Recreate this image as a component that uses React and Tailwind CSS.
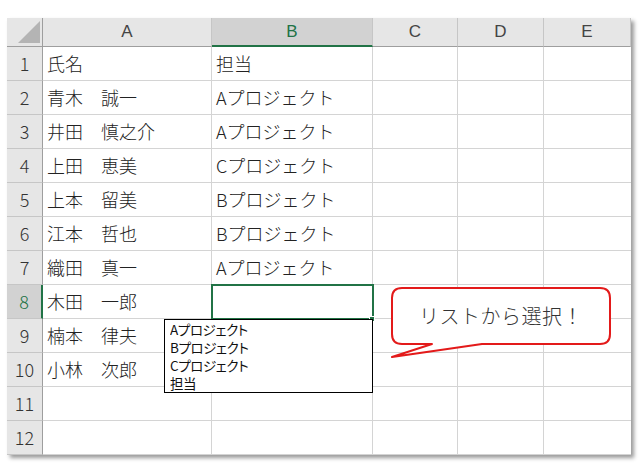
import React from 'react';

const cols = ['A', 'B', 'C', 'D', 'E'];

const rows = [
  ['氏名', '担当'],
  ['青木　誠一', 'Aプロジェクト'],
  ['井田　慎之介', 'Aプロジェクト'],
  ['上田　恵美', 'Cプロジェクト'],
  ['上本　留美', 'Bプロジェクト'],
  ['江本　哲也', 'Bプロジェクト'],
  ['織田　真一', 'Aプロジェクト'],
  ['木田　一郎', ''],
  ['楠本　律夫', ''],
  ['小林　次郎', ''],
  ['', ''],
  ['', ''],
];

const listItems = ['Aプロジェクト', 'Bプロジェクト', 'Cプロジェクト', '担当'];

const font = "font-['Noto_Sans_CJK_JP','Noto_Sans',sans-serif]";

export default function App() {
  return (
    <div className={`w-[642px] h-[464px] bg-white relative overflow-hidden pl-[7px] pt-[18px] ${font}`}>
      <div className="w-[624px] shadow-[3px_3px_4px_rgba(0,0,0,0.4)]">
        <div className="grid grid-cols-[36px_169px_161px_85px_86px_87px] grid-rows-[29px_repeat(12,34px)] bg-white">
          {/* corner */}
          <div className="bg-[#e6e6e6] border-r border-b border-[#9e9e9e] flex items-end justify-end pr-[2px] pb-[3px]">
            <svg width="22" height="22" viewBox="0 0 22 22">
              <polygon points="22,0 22,22 0,22" fill="#b4b4b4" />
            </svg>
          </div>
          {cols.map((c) => (
            <div
              key={c}
              className={
                c === 'B'
                  ? 'bg-[#d2d2d2] border-r border-[#c6c6c6] border-b-2 border-b-[#217346] flex items-center justify-center text-[17px] text-[#217346] font-["Liberation_Sans",sans-serif]'
                  : 'bg-[#e6e6e6] border-r border-[#c6c6c6] border-b border-b-[#9e9e9e] flex items-center justify-center text-[17px] text-[#444] font-["Liberation_Sans",sans-serif]'
              }
            >
              {c}
            </div>
          ))}
          {rows.map((r, i) => {
            const n = i + 1;
            const sel = n === 8;
            return (
              <React.Fragment key={n}>
                <div
                  className={
                    sel
                      ? 'bg-[#d2d2d2] border-b border-[#c6c6c6] border-r-2 border-r-[#217346] flex items-center justify-center text-[18px] font-light text-[#217346]'
                      : 'bg-[#e6e6e6] border-b border-[#c6c6c6] border-r border-r-[#9e9e9e] flex items-center justify-center text-[18px] font-light text-[#333]'
                  }
                >
                  {n}
                </div>
                <div className="border-r border-b border-[#d4d4d4] flex items-center pl-[4px] text-[18px] font-light text-[#222] whitespace-pre">
                  {r[0]}
                </div>
                <div className="border-r border-b border-[#d4d4d4] flex items-center pl-[4px] text-[18px] font-light text-[#222] whitespace-pre">
                  {r[1]}
                </div>
                <div className="border-r border-b border-[#d4d4d4]" />
                <div className="border-r border-b border-[#d4d4d4]" />
                <div className="border-b border-[#d4d4d4]" />
              </React.Fragment>
            );
          })}
        </div>
      </div>

      {/* selected cell B8 */}
      <div className="absolute left-[211px] top-[284px] w-[163px] h-[36px] border-2 border-[#217346]" />
      <div className="absolute left-[369px] top-[316px] w-[6px] h-[6px] bg-[#217346] border border-white" />

      {/* dropdown list */}
      <div className="absolute left-[164px] top-[319px] w-[209px] h-[74px] bg-white border border-black pl-[5px] flex flex-col text-[13.5px] text-[#111] [font-feature-settings:'palt'] tracking-[-0.4px]">
        {listItems.map((t) => (
          <div key={t} className="h-[18px] leading-[18px] overflow-hidden">
            {t}
          </div>
        ))}
      </div>

      {/* callout */}
      <svg className="absolute left-0 top-0 pointer-events-none" width="642" height="464" viewBox="0 0 642 464">
        <path
          d="M402,288 H600 Q610,288 610,298 V334 Q610,344 600,344 H482 L392,357 L432,344 H402 Q392,344 392,334 V298 Q392,288 402,288 Z"
          fill="white"
          stroke="#e31a1a"
          strokeWidth="2"
          strokeLinejoin="round"
        />
      </svg>
      <div className="absolute left-[392px] top-[288px] w-[218px] h-[56px] flex items-center justify-center text-[20px] font-light tracking-[0.5px] text-[#333]">
        リストから選択！
      </div>
    </div>
  );
}
